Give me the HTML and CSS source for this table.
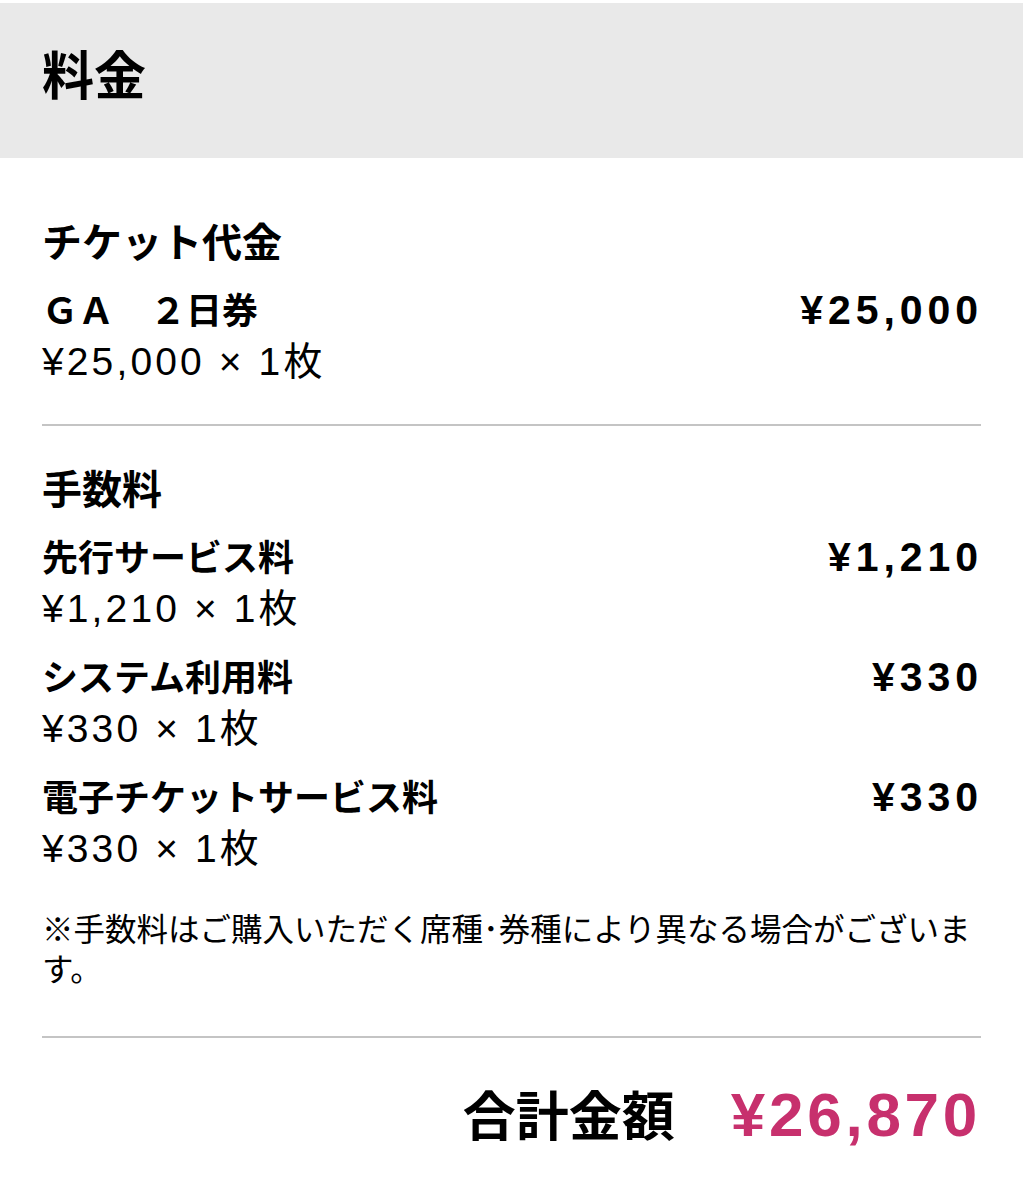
FILE: index.html
```html
<!DOCTYPE html>
<html lang="ja">
<head>
  <meta charset="UTF-8" />
  <meta name="viewport" content="width=device-width, initial-scale=1.0"/>
  <title>料金</title>
  <link rel="stylesheet" href="styles.css">
</head>
<body>
  <div class="header">
    <h1>料金</h1>
  </div>

  <div class="content">
    <div class="section first">
      <h2>チケット代金</h2>
      <div class="row">
        <div class="row-main">
          <span class="name">ＧＡ　２日券</span>
          <span class="amount">¥25,000</span>
        </div>
        <div class="sub">¥25,000 × 1枚</div>
      </div>
    </div>

    <div class="section">
      <h2>手数料</h2>
      <div class="row">
        <div class="row-main">
          <span class="name">先行サービス料</span>
          <span class="amount">¥1,210</span>
        </div>
        <div class="sub">¥1,210 × 1枚</div>
      </div>
      <div class="row">
        <div class="row-main">
          <span class="name">システム利用料</span>
          <span class="amount">¥330</span>
        </div>
        <div class="sub">¥330 × 1枚</div>
      </div>
      <div class="row">
        <div class="row-main">
          <span class="name">電子チケットサービス料</span>
          <span class="amount">¥330</span>
        </div>
        <div class="sub">¥330 × 1枚</div>
      </div>
      <p class="note">※手数料はご購入いただく席種･券種により異なる場合がございます。</p>
    </div>

    <div class="total">
      <span class="total-label">合計金額</span>
      <span class="total-amount">¥26,870</span>
    </div>
  </div>
</body>
</html>
```

FILE: styles.css
```css
* {
  margin: 0;
  padding: 0;
  box-sizing: border-box;
}

body {
  font-family: 'Liberation Sans', 'Noto Sans CJK JP', sans-serif;
  color: #000;
  background: #fff;
  padding-top: 3px;
}

.header {
  background: #e9e9e9;
  height: 155px;
  padding: 0 42px 16px;
  display: flex;
  align-items: center;
}

h1 {
  font-size: 52px;
  font-weight: bold;
}

.content {
  padding: 0 42px;
}

.section {
  padding: 39px 0 40px;
  border-bottom: 2px solid #c4c4c4;
}

.section.first {
  padding-top: 60px;
  padding-bottom: 37px;
}

h2 {
  font-size: 40px;
  font-weight: bold;
  line-height: 50px;
  margin-bottom: 17px;
}

.row + .row {
  margin-top: 18px;
}

.row-main {
  display: flex;
  justify-content: space-between;
  align-items: baseline;
  line-height: 50px;
}

.name {
  font-size: 36px;
  font-weight: bold;
}

.amount {
  font-size: 41px;
  font-weight: bold;
  letter-spacing: 0.12em;
  margin-right: -2px;
}

.sub {
  font-size: 39px;
  line-height: 50px;
  letter-spacing: 0.08em;
}

.note {
  font-family: 'Noto Sans CJK JP', sans-serif;
  font-size: 31.5px;
  line-height: 40px;
  margin-top: 33px;
  padding-bottom: 9px;
}

.total {
  display: flex;
  justify-content: flex-end;
  align-items: baseline;
  gap: 56px;
  padding-top: 47px;
  line-height: 60px;
}

.total-label {
  font-size: 53px;
  font-weight: bold;
}

.total-amount {
  font-size: 62px;
  font-weight: bold;
  color: #c7306d;
  letter-spacing: 0.06em;
}
```
